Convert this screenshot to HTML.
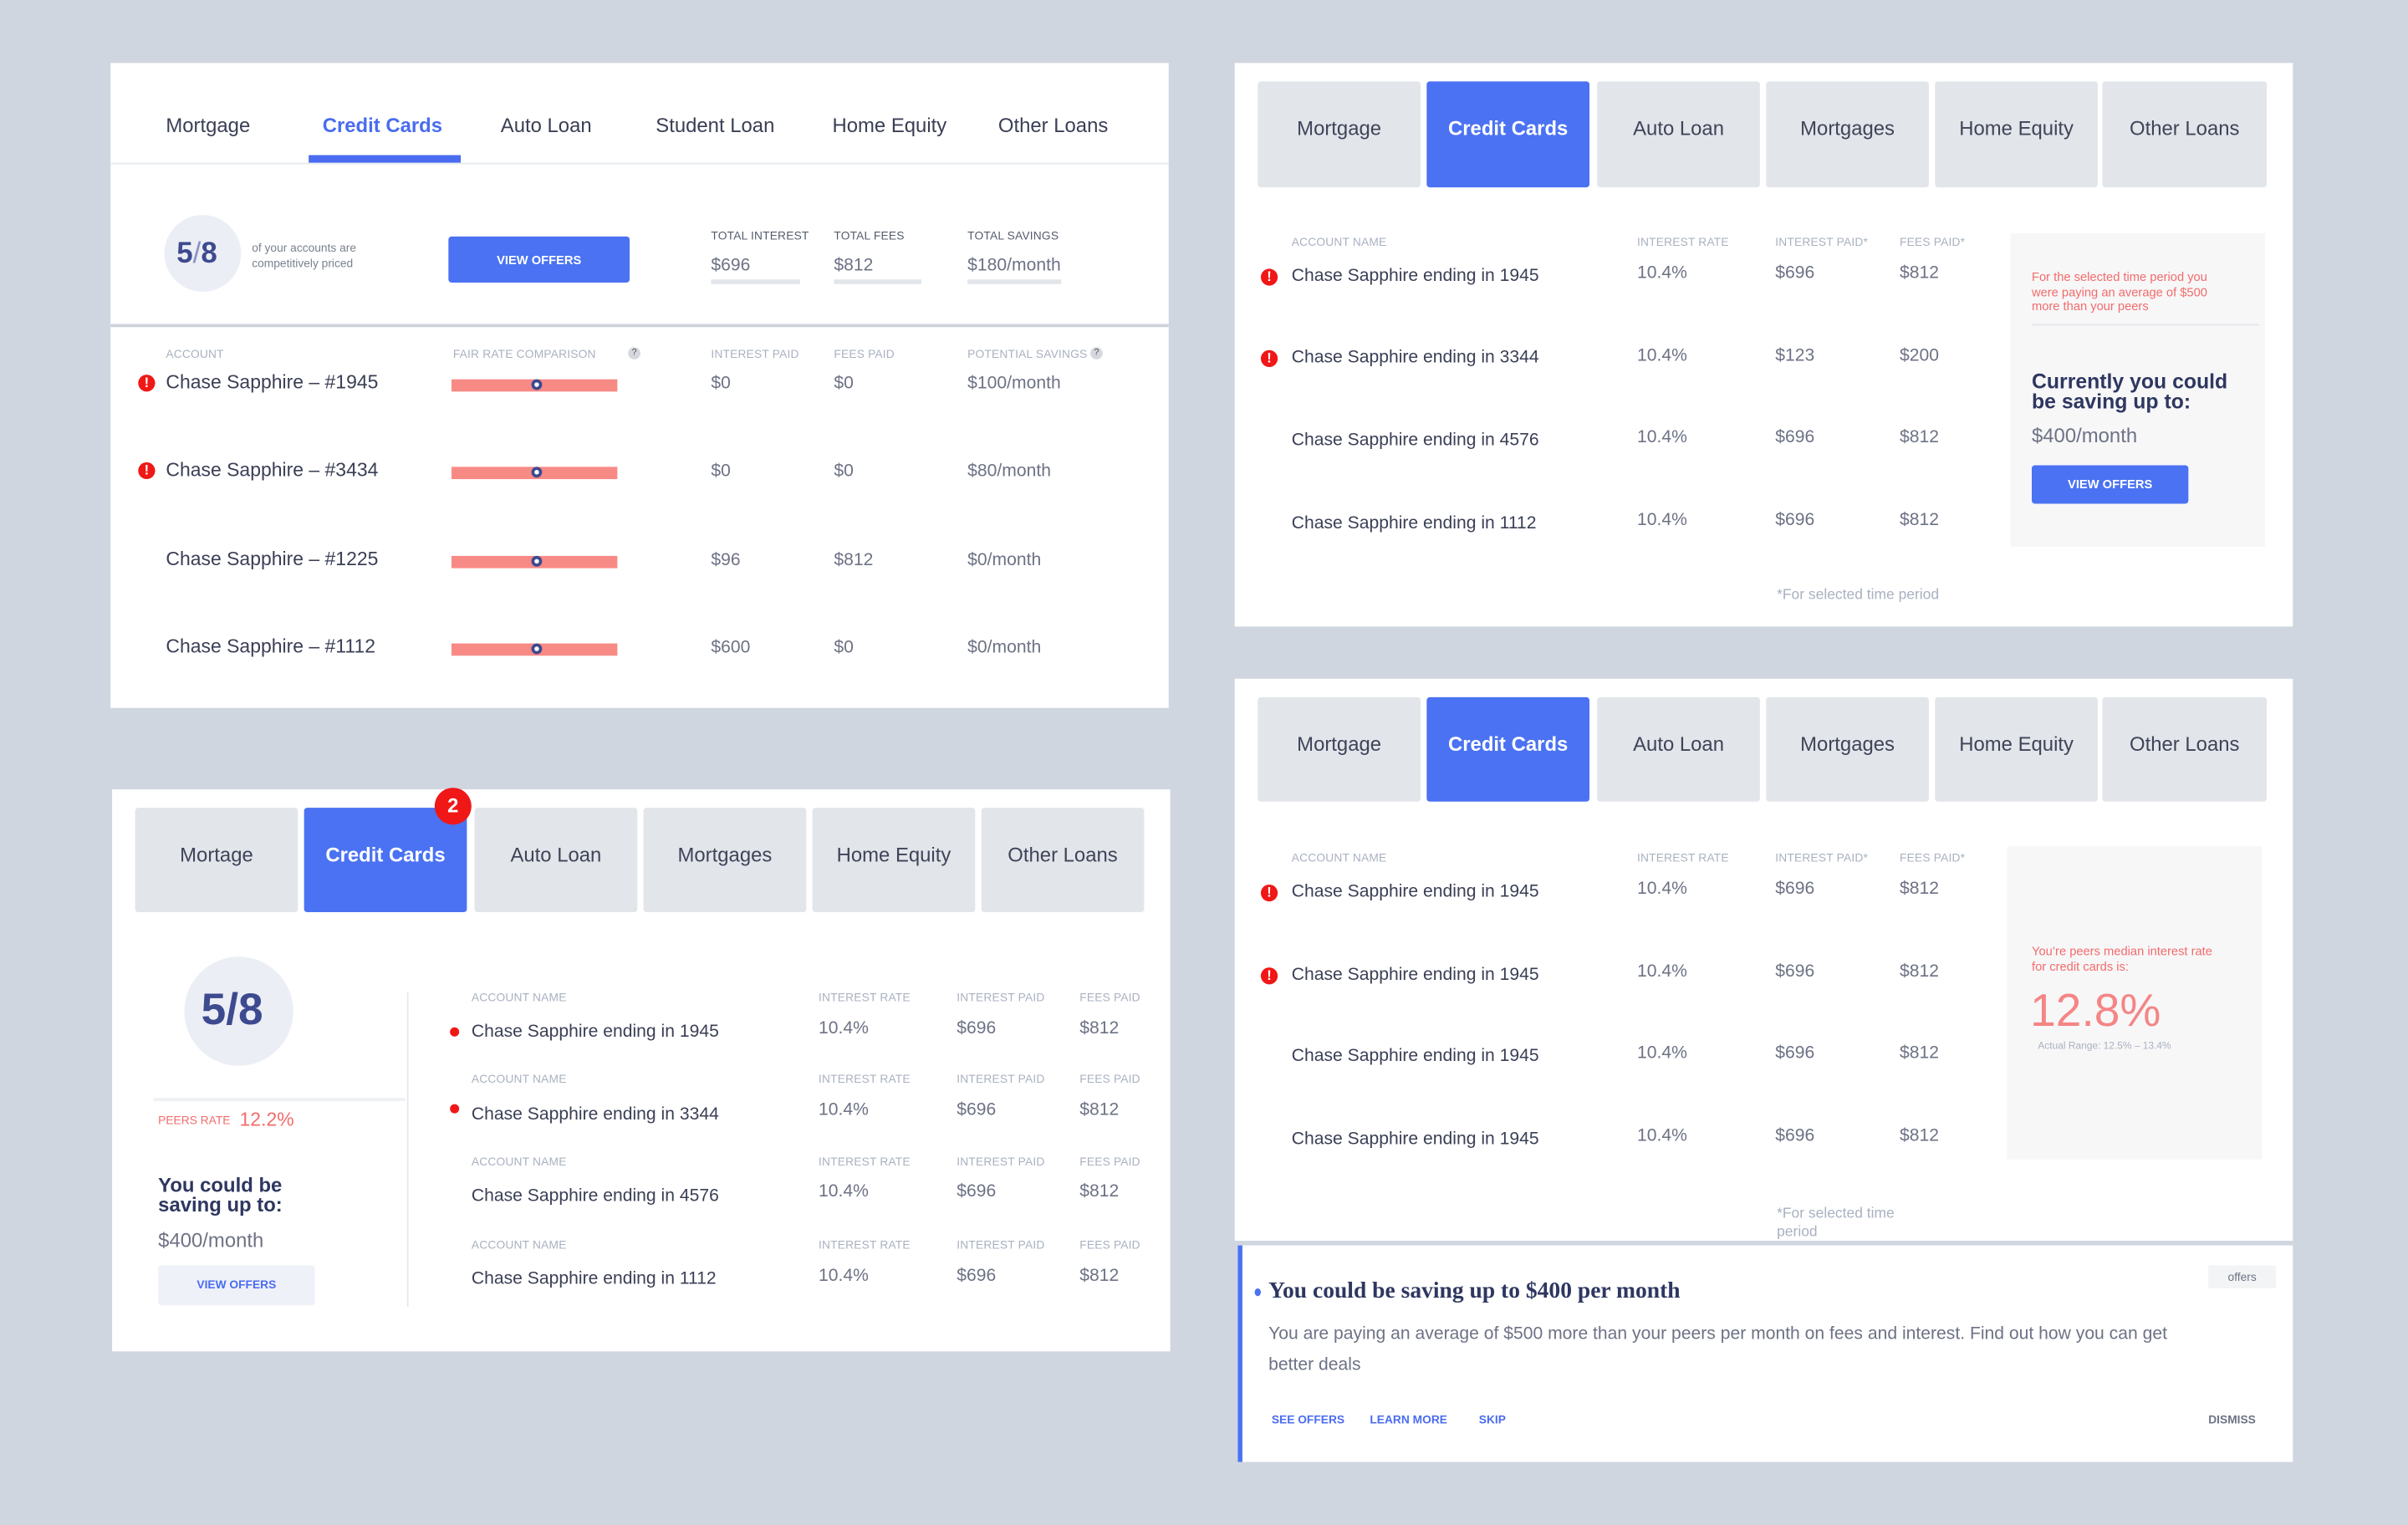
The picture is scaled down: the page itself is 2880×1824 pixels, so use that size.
<!DOCTYPE html>
<html><head><meta charset="utf-8"><style>
*{margin:0;padding:0;box-sizing:border-box}
html,body{width:2880px;height:1824px;overflow:hidden;background:#d0d6e0}
#s{position:absolute;left:0;top:0;width:1568px;height:993px;transform:scale(1.836735);transform-origin:0 0;font-family:"Liberation Sans",sans-serif;color:#3a3f55}
.p{position:absolute;background:#fff}
.t{position:absolute;white-space:nowrap;line-height:1}
.h{font-size:7.5px;color:#a9b1c0;letter-spacing:.1px}
.v{font-size:11.5px;color:#6d7285}
.n{font-size:11.5px;color:#3a3f55}
.tab{position:absolute;background:#e2e5ea;border-radius:2px;font-size:13px;color:#3f4458;display:flex;align-items:flex-start;justify-content:center;padding-top:23px}
.tab.a{background:#4a72f2;color:#fff;font-weight:bold}
.ex{position:absolute;width:11px;height:11px;border-radius:50%;background:#f01717;color:#fff;font-size:9px;font-weight:bold;text-align:center;line-height:11px}
.dot{position:absolute;width:6px;height:6px;border-radius:50%;background:#f01717}
.bar{position:absolute;width:108px;height:8px;background:#f88a86}
.bar i{position:absolute;left:52px;top:0;width:7px;height:7px;border-radius:50%;background:#fff;border:2px solid #3d4a8f}
.btn{position:absolute;background:#4a72f2;color:#fff;font-size:8px;font-weight:bold;display:flex;align-items:center;justify-content:center;border-radius:2px}
</style></head><body><div id="s">

<!-- Panel 1 -->
<div class="p" style="left:72px;top:41px;width:689px;height:420px"></div>
<div class="t" style="left:108px;top:75px;font-size:13px">Mortgage</div>
<div class="t" style="left:210px;top:75px;font-size:13px;color:#4a6cf0;font-weight:bold">Credit Cards</div>
<div style="position:absolute;left:201px;top:101px;width:99px;height:5px;background:#4a6cf0"></div>
<div class="t" style="left:326px;top:75px;font-size:13px">Auto Loan</div>
<div class="t" style="left:427px;top:75px;font-size:13px">Student Loan</div>
<div class="t" style="left:542px;top:75px;font-size:13px">Home Equity</div>
<div class="t" style="left:650px;top:75px;font-size:13px">Other Loans</div>
<div style="position:absolute;left:72px;top:106px;width:689px;height:1px;background:#e6e9ee"></div>
<div style="position:absolute;left:107px;top:140px;width:50px;height:50px;border-radius:50%;background:#eceef5"></div>
<div class="t" style="left:115px;top:156px;font-size:19px;font-weight:bold;color:#3d4a8f">5<span style="font-weight:normal;color:#8a92c0">/</span>8</div>
<div class="t" style="left:164px;top:157px;font-size:7.5px;color:#7a8090;line-height:10px">of your accounts are<br>competitively priced</div>
<div class="btn" style="left:292px;top:154px;width:118px;height:30px">VIEW OFFERS</div>
<div class="t h" style="left:463px;top:150px;color:#555b6e">TOTAL INTEREST</div>
<div class="t h" style="left:543px;top:150px;color:#555b6e">TOTAL FEES</div>
<div class="t h" style="left:630px;top:150px;color:#555b6e">TOTAL SAVINGS</div>
<div class="t v" style="left:463px;top:168px">$696</div>
<div class="t v" style="left:543px;top:168px">$812</div>
<div class="t v" style="left:630px;top:168px">$180/month</div>
<div style="position:absolute;left:463px;top:182px;width:58px;height:3px;background:#e2e5ea"></div>
<div style="position:absolute;left:543px;top:182px;width:57px;height:3px;background:#e2e5ea"></div>
<div style="position:absolute;left:630px;top:182px;width:61px;height:3px;background:#e2e5ea"></div>
<div style="position:absolute;left:72px;top:211px;width:689px;height:2px;background:#cdd2da"></div>
<div class="t h" style="left:108px;top:227px">ACCOUNT</div>
<div class="t h" style="left:295px;top:227px">FAIR RATE COMPARISON</div>
<div class="t" style="left:409px;top:226px;width:8px;height:8px;border-radius:50%;background:#d5d8de;font-size:6px;text-align:center;line-height:8px;color:#555">?</div>
<div class="t h" style="left:463px;top:227px">INTEREST PAID</div>
<div class="t h" style="left:543px;top:227px">FEES PAID</div>
<div class="t h" style="left:630px;top:227px">POTENTIAL SAVINGS</div>
<div class="t" style="left:710px;top:226px;width:8px;height:8px;border-radius:50%;background:#d5d8de;font-size:6px;text-align:center;line-height:8px;color:#555">?</div>

<div class="ex" style="left:90px;top:244px">!</div>
<div class="t n" style="left:108px;top:243px;font-size:12.5px">Chase Sapphire – #1945</div>
<div class="bar" style="left:294px;top:247px"><i></i></div>
<div class="t v" style="left:463px;top:245px">$0</div><div class="t v" style="left:543px;top:245px">$0</div><div class="t v" style="left:630px;top:245px">$100/month</div>

<div class="ex" style="left:90px;top:301px">!</div>
<div class="t n" style="left:108px;top:300px;font-size:12.5px">Chase Sapphire – #3434</div>
<div class="bar" style="left:294px;top:304px"><i></i></div>
<div class="t v" style="left:463px;top:302px">$0</div><div class="t v" style="left:543px;top:302px">$0</div><div class="t v" style="left:630px;top:302px">$80/month</div>

<div class="t n" style="left:108px;top:358px;font-size:12.5px">Chase Sapphire – #1225</div>
<div class="bar" style="left:294px;top:362px"><i></i></div>
<div class="t v" style="left:463px;top:360px">$96</div><div class="t v" style="left:543px;top:360px">$812</div><div class="t v" style="left:630px;top:360px">$0/month</div>

<div class="t n" style="left:108px;top:415px;font-size:12.5px">Chase Sapphire – #1112</div>
<div class="bar" style="left:294px;top:419px"><i></i></div>
<div class="t v" style="left:463px;top:417px">$600</div><div class="t v" style="left:543px;top:417px">$0</div><div class="t v" style="left:630px;top:417px">$0/month</div>

<!-- Panel 2 -->
<div class="p" style="left:804px;top:41px;width:689px;height:367px"></div>
<div class="tab" style="left:819px;top:53px;width:106px;height:69px">Mortgage</div>
<div class="tab a" style="left:929px;top:53px;width:106px;height:69px">Credit Cards</div>
<div class="tab" style="left:1040px;top:53px;width:106px;height:69px">Auto Loan</div>
<div class="tab" style="left:1150px;top:53px;width:106px;height:69px">Mortgages</div>
<div class="tab" style="left:1260px;top:53px;width:106px;height:69px">Home Equity</div>
<div class="tab" style="left:1369px;top:53px;width:107px;height:69px">Other Loans</div>
<div class="t h" style="left:841px;top:154px">ACCOUNT NAME</div>
<div class="t h" style="left:1066px;top:154px">INTEREST RATE</div>
<div class="t h" style="left:1156px;top:154px">INTEREST PAID*</div>
<div class="t h" style="left:1237px;top:154px">FEES PAID*</div>
<div class="ex" style="left:821px;top:175px">!</div>
<div class="t n" style="left:841px;top:175px">Chase Sapphire ending in 1945</div>
<div class="t v" style="left:1066px;top:173px">10.4%</div><div class="t v" style="left:1156px;top:173px">$696</div><div class="t v" style="left:1237px;top:173px">$812</div>
<div class="ex" style="left:821px;top:228px">!</div>
<div class="t n" style="left:841px;top:228px">Chase Sapphire ending in 3344</div>
<div class="t v" style="left:1066px;top:227px">10.4%</div><div class="t v" style="left:1156px;top:227px">$123</div><div class="t v" style="left:1237px;top:227px">$200</div>
<div class="t n" style="left:841px;top:282px">Chase Sapphire ending in 4576</div>
<div class="t v" style="left:1066px;top:280px">10.4%</div><div class="t v" style="left:1156px;top:280px">$696</div><div class="t v" style="left:1237px;top:280px">$812</div>
<div class="t n" style="left:841px;top:336px">Chase Sapphire ending in 1112</div>
<div class="t v" style="left:1066px;top:334px">10.4%</div><div class="t v" style="left:1156px;top:334px">$696</div><div class="t v" style="left:1237px;top:334px">$812</div>
<div style="position:absolute;left:1309px;top:152px;width:166px;height:204px;background:#f7f7f8"></div>
<div class="t" style="left:1323px;top:176px;font-size:8px;color:#f36b6b;line-height:9.5px">For the selected time period you<br>were paying an average of $500<br>more than your peers</div>
<div style="position:absolute;left:1323px;top:211px;width:148px;height:1px;background:#e4e5e8"></div>
<div class="t" style="left:1323px;top:242px;font-size:13.5px;font-weight:bold;color:#2e3760;line-height:13px">Currently you could<br>be saving up to:</div>
<div class="t" style="left:1323px;top:277px;font-size:13px;color:#6d7285">$400/month</div>
<div class="btn" style="left:1323px;top:303px;width:102px;height:25px">VIEW OFFERS</div>
<div class="t" style="left:1157px;top:383px;font-size:9.5px;color:#a9b1c0">*For selected time period</div>

<!-- Panel 3 -->
<div class="p" style="left:73px;top:514px;width:689px;height:366px"></div>
<div class="tab" style="left:88px;top:526px;width:106px;height:68px">Mortage</div>
<div class="tab a" style="left:198px;top:526px;width:106px;height:68px">Credit Cards</div>
<div class="tab" style="left:309px;top:526px;width:106px;height:68px">Auto Loan</div>
<div class="tab" style="left:419px;top:526px;width:106px;height:68px">Mortgages</div>
<div class="tab" style="left:529px;top:526px;width:106px;height:68px">Home Equity</div>
<div class="tab" style="left:639px;top:526px;width:106px;height:68px">Other Loans</div>
<div class="t" style="left:283px;top:513px;width:24px;height:24px;border-radius:50%;background:#f01717;color:#fff;font-size:13px;font-weight:bold;text-align:center;line-height:24px">2</div>
<div style="position:absolute;left:120px;top:623px;width:71px;height:71px;border-radius:50%;background:#eceef5"></div>
<div class="t" style="left:131px;top:644px;font-size:29px;font-weight:bold;color:#3d4a8f">5/8</div>
<div style="position:absolute;left:100px;top:715px;width:164px;height:2px;background:#eef0f3"></div>
<div class="t" style="left:103px;top:726px;font-size:7.5px;color:#f36b6b">PEERS RATE</div>
<div class="t" style="left:156px;top:723px;font-size:12.5px;color:#f36b6b">12.2%</div>
<div class="t" style="left:103px;top:765px;font-size:13px;font-weight:bold;color:#2e3760;line-height:13px">You could be<br>saving up to:</div>
<div class="t" style="left:103px;top:801px;font-size:13px;color:#6d7285">$400/month</div>
<div class="t" style="left:103px;top:824px;width:102px;height:26px;background:#eef1f8;color:#4a6cf0;font-size:7.5px;font-weight:bold;text-align:center;line-height:26px;border-radius:2px">VIEW OFFERS</div>
<div style="position:absolute;left:265px;top:646px;width:1px;height:205px;background:#e6e9ee"></div>

<div class="t h" style="left:307px;top:646px">ACCOUNT NAME</div><div class="t h" style="left:533px;top:646px">INTEREST RATE</div><div class="t h" style="left:623px;top:646px">INTEREST PAID</div><div class="t h" style="left:703px;top:646px">FEES PAID</div>
<div class="dot" style="left:293px;top:669px"></div><div class="t n" style="left:307px;top:667px">Chase Sapphire ending in 1945</div>
<div class="t v" style="left:533px;top:665px">10.4%</div><div class="t v" style="left:623px;top:665px">$696</div><div class="t v" style="left:703px;top:665px">$812</div>

<div class="t h" style="left:307px;top:699px">ACCOUNT NAME</div><div class="t h" style="left:533px;top:699px">INTEREST RATE</div><div class="t h" style="left:623px;top:699px">INTEREST PAID</div><div class="t h" style="left:703px;top:699px">FEES PAID</div>
<div class="dot" style="left:293px;top:719px"></div><div class="t n" style="left:307px;top:721px">Chase Sapphire ending in 3344</div>
<div class="t v" style="left:533px;top:718px">10.4%</div><div class="t v" style="left:623px;top:718px">$696</div><div class="t v" style="left:703px;top:718px">$812</div>

<div class="t h" style="left:307px;top:753px">ACCOUNT NAME</div><div class="t h" style="left:533px;top:753px">INTEREST RATE</div><div class="t h" style="left:623px;top:753px">INTEREST PAID</div><div class="t h" style="left:703px;top:753px">FEES PAID</div>
<div class="t n" style="left:307px;top:774px">Chase Sapphire ending in 4576</div>
<div class="t v" style="left:533px;top:771px">10.4%</div><div class="t v" style="left:623px;top:771px">$696</div><div class="t v" style="left:703px;top:771px">$812</div>

<div class="t h" style="left:307px;top:807px">ACCOUNT NAME</div><div class="t h" style="left:533px;top:807px">INTEREST RATE</div><div class="t h" style="left:623px;top:807px">INTEREST PAID</div><div class="t h" style="left:703px;top:807px">FEES PAID</div>
<div class="t n" style="left:307px;top:828px">Chase Sapphire ending in 1112</div>
<div class="t v" style="left:533px;top:826px">10.4%</div><div class="t v" style="left:623px;top:826px">$696</div><div class="t v" style="left:703px;top:826px">$812</div>

<!-- Panel 4 -->
<div class="p" style="left:804px;top:442px;width:689px;height:366px"></div>
<div class="tab" style="left:819px;top:454px;width:106px;height:68px">Mortgage</div>
<div class="tab a" style="left:929px;top:454px;width:106px;height:68px">Credit Cards</div>
<div class="tab" style="left:1040px;top:454px;width:106px;height:68px">Auto Loan</div>
<div class="tab" style="left:1150px;top:454px;width:106px;height:68px">Mortgages</div>
<div class="tab" style="left:1260px;top:454px;width:106px;height:68px">Home Equity</div>
<div class="tab" style="left:1369px;top:454px;width:107px;height:68px">Other Loans</div>
<div class="t h" style="left:841px;top:555px">ACCOUNT NAME</div>
<div class="t h" style="left:1066px;top:555px">INTEREST RATE</div>
<div class="t h" style="left:1156px;top:555px">INTEREST PAID*</div>
<div class="t h" style="left:1237px;top:555px">FEES PAID*</div>
<div class="ex" style="left:821px;top:576px">!</div>
<div class="t n" style="left:841px;top:576px">Chase Sapphire ending in 1945</div>
<div class="t v" style="left:1066px;top:574px">10.4%</div><div class="t v" style="left:1156px;top:574px">$696</div><div class="t v" style="left:1237px;top:574px">$812</div>
<div class="ex" style="left:821px;top:630px">!</div>
<div class="t n" style="left:841px;top:630px">Chase Sapphire ending in 1945</div>
<div class="t v" style="left:1066px;top:628px">10.4%</div><div class="t v" style="left:1156px;top:628px">$696</div><div class="t v" style="left:1237px;top:628px">$812</div>
<div class="t n" style="left:841px;top:683px">Chase Sapphire ending in 1945</div>
<div class="t v" style="left:1066px;top:681px">10.4%</div><div class="t v" style="left:1156px;top:681px">$696</div><div class="t v" style="left:1237px;top:681px">$812</div>
<div class="t n" style="left:841px;top:737px">Chase Sapphire ending in 1945</div>
<div class="t v" style="left:1066px;top:735px">10.4%</div><div class="t v" style="left:1156px;top:735px">$696</div><div class="t v" style="left:1237px;top:735px">$812</div>
<div style="position:absolute;left:1307px;top:551px;width:166px;height:204px;background:#f7f7f8"></div>
<div class="t" style="left:1323px;top:615px;font-size:8px;color:#f36b6b;line-height:9.5px">You’re peers median interest rate<br>for credit cards is:</div>
<div class="t" style="left:1322px;top:644px;font-size:30px;color:#f58585">12.8%</div>
<div class="t" style="left:1327px;top:679px;font-size:6.5px;color:#a9b1c0">Actual Range: 12.5% – 13.4%</div>
<div class="t" style="left:1157px;top:785px;font-size:9.5px;color:#a9b1c0;line-height:12px">*For selected time<br>period</div>

<!-- Panel 5 -->
<div class="p" style="left:806px;top:811px;width:687px;height:141px;border-left:3px solid #4a72f2"></div>
<div class="dot" style="left:817px;top:839px;width:4px;height:5px;background:#4a72f2"></div>
<div class="t" style="left:826px;top:834px;font-size:15px;font-weight:bold;color:#2e3760;font-family:'Liberation Serif',serif">You could be saving up to $400 per month</div>
<div class="t" style="left:826px;top:859px;font-size:11.5px;color:#6d7285;line-height:20px;white-space:normal;width:588px">You are paying an average of $500 more than your peers per month on fees and interest. Find out how you can get better deals</div>
<div class="t" style="left:1438px;top:824px;width:44px;height:15px;background:#f3f4f6;font-size:7.5px;color:#6d7285;text-align:center;line-height:15px">offers</div>
<div class="t" style="left:828px;top:921px;font-size:7.5px;font-weight:bold;color:#4a6cf0">SEE OFFERS</div>
<div class="t" style="left:892px;top:921px;font-size:7.5px;font-weight:bold;color:#4a6cf0">LEARN MORE</div>
<div class="t" style="left:963px;top:921px;font-size:7.5px;font-weight:bold;color:#4a6cf0">SKIP</div>
<div class="t" style="left:1438px;top:921px;font-size:7.5px;font-weight:bold;color:#6d7285">DISMISS</div>

</div></body></html>
